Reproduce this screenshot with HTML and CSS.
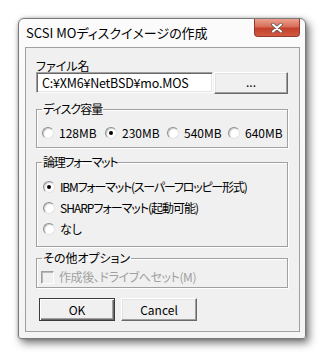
FILE: index.html
```html
<!DOCTYPE html>
<html lang="ja">
<head>
    <meta charset="UTF-8">
    <title>SCSI MOディスクイメージの作成</title>
    <link rel="stylesheet" href="styles.css">
</head>
<body>
    <div class="window">
        <div class="titlebar">
            <span class="title">SCSI MOディスクイメージの作成</span>
            <span class="close-btn">
                <svg width="12" height="10" viewBox="0 0 12 10">
                    <path d="M2 1.5 L10 8.5 M10 1.5 L2 8.5" stroke="#5a5a5a" stroke-width="3.6" stroke-linecap="round"/>
                    <path d="M2 1.5 L10 8.5 M10 1.5 L2 8.5" stroke="#fff" stroke-width="2" stroke-linecap="round"/>
                </svg>
            </span>
        </div>

        <div class="client">
            <div class="field-label">ファイル名</div>
            <div class="file-row">
                <div class="textbox">C:¥XM6¥NetBSD¥mo.MOS</div>
                <div class="btn browse-btn">...</div>
            </div>

            <fieldset class="group size-group">
                <legend class="tight">ディスク容量</legend>
                <div class="size-row">
                    <label class="radio"><span class="radio-mark"></span>128MB</label>
                    <label class="radio"><span class="radio-mark checked"></span>230MB</label>
                    <label class="radio"><span class="radio-mark"></span>540MB</label>
                    <label class="radio"><span class="radio-mark"></span>640MB</label>
                </div>
            </fieldset>

            <fieldset class="group format-group">
                <legend class="tighter">論理フォーマット</legend>
                <label class="radio tighter-text"><span class="radio-mark checked"></span>IBMフォーマット(スーパーフロッピー形式)</label>
                <label class="radio tight-text"><span class="radio-mark"></span>SHARPフォーマット(起動可能)</label>
                <label class="radio"><span class="radio-mark"></span>なし</label>
            </fieldset>

            <fieldset class="group option-group">
                <legend>その他オプション</legend>
                <label class="check disabled"><span class="check-mark"></span>作成後、ドライブへセット(M)</label>
            </fieldset>

            <div class="buttons">
                <div class="btn default-btn">OK</div>
                <div class="btn">Cancel</div>
            </div>
        </div>
    </div>
</body>
</html>
```

FILE: styles.css
```css
* {
    box-sizing: border-box;
}

body {
    margin: 0;
    width: 329px;
    height: 360px;
    background: #fff;
    font-family: "Noto Sans CJK JP", sans-serif;
    font-size: 12px;
    line-height: 14px;
    color: #000;
    font-feature-settings: "palt" 1;
    overflow: hidden;
}

.window {
    margin: 18px 0 0 18px;
    width: 288px;
    height: 321px;
    background: linear-gradient(#fbfbfb, #f4f4f4);
    border: 1px solid #7a7a7a;
    border-radius: 6px 6px 3px 3px;
    box-shadow: 3px 4px 9px rgba(0, 0, 0, 0.55), 0 0 3px rgba(0, 0, 0, 0.25);
}

.titlebar {
    height: 28px;
    display: flex;
    justify-content: space-between;
    padding: 0 5px 0 7px;
}

.title {
    align-self: center;
    font-size: 13px;
}

.close-btn {
    width: 46px;
    height: 18px;
    display: flex;
    align-items: center;
    justify-content: center;
    border: 1px solid #8f3b2f;
    border-top: none;
    border-radius: 0 0 4px 4px;
    background: linear-gradient(#eba08f, #d86e58 45%, #c4402a 55%, #d35a42);
}

.close-btn svg {
    display: block;
}

.client {
    margin: 0 5px 0 6px;
    height: 285px;
    background: #f0f0f0;
    border: 1px solid #a0a0a0;
    padding: 11px 0 0 10px;
}

.field-label {
    line-height: 13px;
}

.file-row {
    display: flex;
    align-items: flex-start;
}

.textbox {
    width: 177px;
    height: 21px;
    background: #fff;
    border: 1px solid;
    border-color: #a0a0a0 #fff #fff #a0a0a0;
    box-shadow: inset 1px 1px 0 #696969, inset -1px -1px 0 #e3e3e3;
    padding: 3px 0 0 5px;
    font-size: 12.5px;
    letter-spacing: -0.2px;
}

.btn {
    display: flex;
    align-items: center;
    justify-content: center;
    background: #f0f0f0;
    border: 1px solid;
    border-color: #fff #696969 #696969 #fff;
    box-shadow: inset -1px -1px 0 #a0a0a0, inset 1px 1px 0 #e3e3e3;
}

.browse-btn {
    margin-left: 1px;
    width: 74px;
    height: 22px;
    padding-bottom: 2px;
}

/* legend sits at fieldset padding-left + margin, so all groups share 5px */
.group {
    margin: 0;
    width: 252px;
    border: 1px solid #a0a0a0;
    box-shadow: inset 1px 1px 0 #fff, 1px 1px 0 #fff;
    padding: 0 0 0 5px;
}

.group legend {
    margin-left: 0;
    padding: 0 1px;
    line-height: 14px;
}

.tight {
    letter-spacing: -1px;
}

.tighter {
    letter-spacing: -1.3px;
}

.tight-text {
    letter-spacing: -1px;
}

.tighter-text {
    letter-spacing: -1.2px;
}

.size-group {
    margin-top: 8px;
    padding-top: 10px;
    padding-bottom: 7px;
}

.size-row {
    display: grid;
    grid-template-columns: 63px 62px 61px auto;
}

.format-group {
    margin-top: 7px;
    padding-top: 11px;
    padding-bottom: 10px;
    display: flex;
    flex-direction: column;
    gap: 7px;
}

.format-group .radio {
    margin-left: 1px;
}

.option-group {
    margin-top: 4px;
    padding-top: 5px;
    padding-bottom: 3px;
}

.option-group .check {
    margin-left: -1px;
    letter-spacing: -0.4px;
}

.radio,
.check {
    display: flex;
    align-items: center;
    height: 14px;
    gap: 5px;
}

.radio-mark {
    width: 12px;
    height: 12px;
    border-radius: 50%;
    background: #fff;
    border: 1px solid;
    border-color: #8c8c8c #e3e3e3 #e3e3e3 #8c8c8c;
    box-shadow: inset 1px 1px 1px rgba(0, 0, 0, 0.2);
    display: flex;
    align-items: center;
    justify-content: center;
}

.radio-mark.checked::after {
    content: "";
    width: 4px;
    height: 4px;
    border-radius: 50%;
    background: #000;
}

.check-mark {
    width: 13px;
    height: 13px;
    background: #f0f0f0;
    border: 1px solid;
    border-color: #a0a0a0 #fff #fff #a0a0a0;
    box-shadow: inset 1px 1px 0 #b8b8b8;
}

.check.disabled {
    color: #a0a0a0;
}

.buttons {
    margin: 10px 0 0 3px;
    display: flex;
    gap: 6px;
}

.buttons .btn {
    width: 76px;
    height: 23px;
}

.default-btn {
    width: 75px;
    border: 1px solid #3c3c3c;
    box-shadow: inset 1px 1px 0 #fff, inset -1px -1px 0 #696969, inset -2px -2px 0 #a0a0a0;
}
```
